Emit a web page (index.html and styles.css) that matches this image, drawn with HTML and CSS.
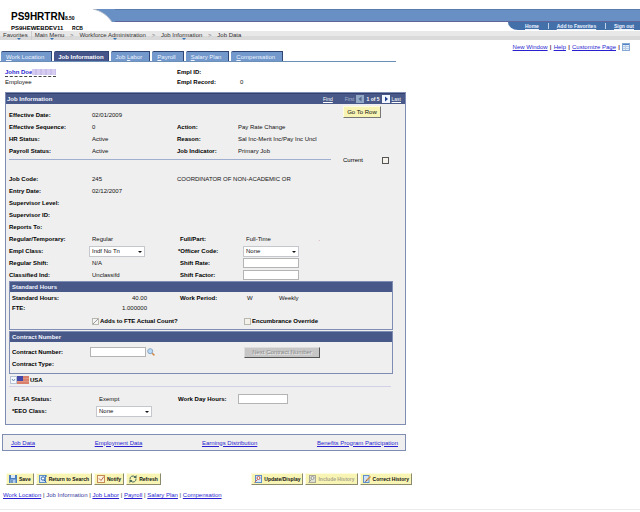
FILE: index.html
```html
<!DOCTYPE html>
<html lang="en">
<head>
  <meta charset="UTF-8">
  <meta name="viewport" content="width=device-width, initial-scale=1.0">
  <title>Job Data</title>
  <link rel="stylesheet" href="styles.css">
</head>
<body>
  <header class="masthead">
    <div class="brand">
      <div class="brand-name">PS9HRTRN<small>8.50</small></div>
      <div class="brand-db">PS9HEWEBDEV11 <span>RCB</span></div>
    </div>
    <div class="banner">
      <div class="banner-bar">
        <svg class="banner-curve" width="22" height="13" viewBox="0 0 22 13"><path d="M0 0H22V13H19C15 7 9 2 0 0Z" fill="#6990c4"/><path d="M0 0C9 2 15 7 19 13" fill="none" stroke="#b4bccb"/></svg>
        <div class="banner-fill"></div>
      </div>
      <nav class="user-nav">
        <a href="#">Home</a>
        <a href="#">Add to Favorites</a>
        <a href="#">Sign out</a>
      </nav>
    </div>
  </header>

  <nav class="crumbs">
    <a class="menu first" href="#">Favorites</a>
    <a class="menu" href="#">Main Menu</a><i>&gt;</i>
    <a class="menu" href="#">Workforce Administration</a><i>&gt;</i>
    <a class="menu" href="#">Job Information</a><i>&gt;</i>
    <a href="#">Job Data</a>
  </nav>

  <div class="page-links">
    <a href="#">New Window</a><b>|</b><a href="#">Help</a><b>|</b><a href="#">Customize Page</a><b>|</b>
    <svg width="8" height="8" viewBox="0 0 8 8"><rect x=".5" y=".5" width="7" height="7" fill="#e4eefa" stroke="#86a8d4"/><path d="M1 1.5H7" stroke="#4f83c4"/><path d="M1 3.5H7M1 5.5H7M3.5 2V7" stroke="#b8cce6"/></svg>
  </div>

  <main class="content">
    <nav class="tabs">
      <a class="tab" href="#"><u>W</u>ork Location</a>
      <a class="tab active" href="#">Job Information</a>
      <a class="tab" href="#">Job <u>L</u>abor</a>
      <a class="tab" href="#"><u>P</u>ayroll</a>
      <a class="tab" href="#"><u>S</u>alary Plan</a>
      <a class="tab" href="#"><u>C</u>ompensation</a>
    </nav>

    <div class="person">
      <div><a class="person-name" href="#">John Doe<span class="masked"></span></a></div><b>Empl ID:</b><span></span>
      <span>Employee</span><b>Empl Record:</b><span>0</span>
    </div>

    <section class="panel">
      <div class="panel-head">
        <h2>Job Information</h2>
        <div class="scroller">
          <a class="find" href="#">Find</a>
          <span class="dim">First</span>
          <svg width="8" height="8" viewBox="0 0 8 8"><rect width="8" height="8" fill="#93a8c4"/><path d="M5.5 1.5V6.5L2.5 4Z" fill="#52678f"/></svg>
          <b>1 of 5</b>
          <svg width="8" height="8" viewBox="0 0 8 8"><rect width="8" height="8" fill="#f2f6ff"/><path d="M3 1.5V6.5L6 4Z" fill="#1f3f8c"/></svg>
          <a href="#">Last</a>
        </div>
      </div>

      <div class="status">
        <div class="status-main">
          <div class="fields cols-a">
            <b>Effective Date:</b><span>02/01/2009</span><b></b><span></span>
            <b>Effective Sequence:</b><span>0</span><b>Action:</b><span>Pay Rate Change</span>
            <b>HR Status:</b><span>Active</span><b>Reason:</b><span>Sal Inc-Merit Inc/Pay Inc Uncl</span>
            <b>Payroll Status:</b><span>Active</span><b>Job Indicator:</b><span>Primary Job</span>
          </div>
          <hr>
        </div>
        <div class="status-side">
          <button class="btn goto">Go To Row</button>
          <label class="current">Current <input type="checkbox"></label>
        </div>
      </div>

      <div class="fields cols-a">
        <b>Job Code:</b><span>245</span><span class="wide">COORDINATOR OF NON-ACADEMIC OR</span>
        <b>Entry Date:</b><span class="rest">02/12/2007</span>
        <b class="row">Supervisor Level:</b>
        <b class="row">Supervisor ID:</b>
        <b class="row">Reports To:</b>
      </div>
      <div class="fields cols-b">
        <b>Regular/Temporary:</b><span>Regular</span><b>Full/Part:</b><span class="mark">Full-Time<i>.</i></span>
        <label for="empl-class">Empl Class:</label><div class="drop"><select id="empl-class"><option>Indf No Tn</option></select></div>
        <label class="req" for="officer">*Officer Code:</label><div class="drop"><select id="officer"><option>None</option></select></div>
        <b>Regular Shift:</b><span>N/A</span><label for="rate">Shift Rate:</label><input class="box" id="rate" type="text">
        <b>Classified Ind:</b><span>Unclassifd</span><label for="factor">Shift Factor:</label><input class="box" id="factor" type="text">
      </div>

      <section class="group">
        <h3>Standard Hours</h3>
        <div class="fields cols-hours">
          <b>Standard Hours:</b><span class="num">40.00</span><b>Work Period:</b><span>W</span><span>Weekly</span>
          <b>FTE:</b><span class="num">1.000000</span>
        </div>
        <div class="checks">
          <label><input type="checkbox" checked disabled>Adds to FTE Actual Count?</label>
          <label><input type="checkbox" disabled>Encumbrance Override</label>
        </div>
      </section>

      <section class="group">
        <h3>Contract Number</h3>
        <div class="fields cols-contract">
          <label for="contract">Contract Number:</label><input class="box" id="contract" type="text">
          <svg width="8" height="8" viewBox="0 0 8 8"><path d="M5 5L7.4 7.4" stroke="#d08a4a" stroke-width="1.5"/><circle cx="3.2" cy="3.2" r="2.5" fill="#b8dcf8" stroke="#8ca4c0"/></svg>
          <button class="btn next" disabled>Next Contract Number</button>
          <b>Contract Type:</b>
        </div>
      </section>

      <div class="country">
        <svg width="19" height="8" viewBox="0 0 19 8"><rect x=".5" y=".5" width="6" height="7" fill="#f4f7fb" stroke="#b8c4d4"/><path d="M2 3L3.5 5L5 3" fill="none" stroke="#7090b8"/><rect x="7" width="12" height="8" fill="#d8806c"/><path d="M7 2.5H19M7 5.5H19" stroke="#e09484"/><rect x="7" width="6" height="5" fill="#4448a8"/></svg>
        <b>USA</b>
      </div>
      <div class="fields cols-usa">
        <b>FLSA Status:</b><span>Exempt</span><label for="hours">Work Day Hours:</label><input class="box" id="hours" type="text">
        <label class="req" for="eeo">*EEO Class:</label><div class="drop"><select id="eeo"><option>None</option></select></div>
      </div>
    </section>

    <nav class="related">
      <a href="#">Job Data</a>
      <a href="#">Employment Data</a>
      <a href="#">Earnings Distribution</a>
      <a href="#">Benefits Program Participation</a>
    </nav>

    <div class="toolbar">
      <button class="btn"><svg width="8" height="8" viewBox="0 0 8 8"><rect width="8" height="8" fill="#4a7cc0"/><rect x="2" width="4" height="3" fill="#dce8f8"/><rect x="1.5" y="4.5" width="5" height="3.5" fill="#b4cdec"/><path d="M3 5V8" stroke="#35629f"/></svg>Save</button>
      <button class="btn"><svg width="8" height="8" viewBox="0 0 8 8"><rect x=".5" y=".5" width="6" height="7" fill="#d4e6fa" stroke="#5f8fc8"/><circle cx="4" cy="3.5" r="1.7" fill="#fff" stroke="#2f62a8"/><path d="M5 5L7.5 7.5" stroke="#2f62a8"/><path d="M6 1H8" stroke="#2f62a8"/></svg>Return to Search</button>
      <button class="btn"><svg width="8" height="8" viewBox="0 0 8 8"><rect x=".5" y=".5" width="7" height="7" fill="#fdf2dc" stroke="#c88a54"/><path d="M2 3.5L4 5.5L7 1.5" fill="none" stroke="#b86c4c"/></svg>Notify</button>
      <button class="btn"><svg width="8" height="8" viewBox="0 0 8 8"><path d="M1 4.5A3 3 0 0 1 6 1.8M7 3.5A3 3 0 0 1 2 6.2" fill="none" stroke="#45665c"/><path d="M7.5 0V3H4.5ZM.5 8V5H3.5Z" fill="#45665c"/></svg>Refresh</button>
      <button class="btn push"><svg width="8" height="8" viewBox="0 0 8 8"><rect x="1.5" y=".5" width="6" height="7" fill="#d8e8fa" stroke="#5f8fc8"/><circle cx="4.5" cy="3" r="1.5" fill="#fff" stroke="#c86050"/><path d="M3.5 4.5L.5 7.5" stroke="#c86050"/></svg>Update/Display</button>
      <button class="btn" disabled><svg width="8" height="8" viewBox="0 0 8 8"><rect x="1.5" y=".5" width="6" height="7" fill="#e0e0d0" stroke="#a8a898"/><circle cx="4.5" cy="3" r="1.5" fill="#eee" stroke="#999"/><path d="M3.5 4.5L.5 7.5" stroke="#999"/></svg>Include History</button>
      <button class="btn"><svg width="8" height="8" viewBox="0 0 8 8"><rect x=".5" y=".5" width="5.5" height="7" fill="#cfe2f8" stroke="#5f8fc8"/><path d="M3 6L7.5 1.5" stroke="#d8924c" stroke-width="1.5"/><path d="M2.5 6.5L3.5 5.5" stroke="#333"/></svg>Correct History</button>
    </div>

    <nav class="foot-links">
      <a href="#">Work Location</a> | <span>Job Information</span> | <a href="#">Job Labor</a> | <a href="#">Payroll</a> | <a href="#">Salary Plan</a> | <a href="#">Compensation</a>
    </nav>
  </main>
  <hr class="page-end">
</body>
</html>
```

FILE: styles.css
```css
* { box-sizing: border-box; }
body { margin: 0; background: #fff; color: #111; font: 6px/12px "Liberation Sans", Arial, sans-serif; }
a { color: #2a1fd0; }
svg { flex: none; display: block; }
h2, h3 { margin: 0; font-size: 6px; }
label { font-weight: bold; }
b, label { color: #000; }

/* masthead */
.masthead { display: flex; padding-top: 9px; height: 31px; }
.brand { width: 93px; padding: 2px 0 0 11px; font-weight: bold; color: #000; white-space: nowrap; }
.brand-name { font-size: 10px; line-height: 11px; }
.brand-name small { font-size: 5px; }
.brand-db { font-size: 6px; line-height: 8px; color: #000; }
.brand-db span { margin-left: 7px; font-size: 5px; }
.banner { flex: 1; display: flex; flex-direction: column; }
.banner-bar { display: flex; height: 13px; }
.banner-fill { flex: 1; background: #6990c4; border-top: 1px solid #587cac; border-bottom: 1px solid #62659a; }
.user-nav { align-self: flex-end; display: flex; width: 132px; height: 8px; background: #4470aa; border-bottom-left-radius: 10px 8px; justify-content: space-between; padding: 0 6px 0 17px; }
.user-nav a { color: #eef4ff; font-size: 5px; font-weight: bold; line-height: 8px; }
.user-nav a + a { position: relative; }
.user-nav a + a::before { content: ""; position: absolute; left: -9px; top: 1px; width: 1px; height: 6px; background: #c0d0e6; }

.crumbs { display: flex; height: 9px; padding-left: 3px; line-height: 8px; background: linear-gradient(#e8e8e8 60%, #dadada 60%); }
.crumbs a { color: #333; text-decoration: none; }
.crumbs .first { margin-right: 3px; padding-right: 3px; border-right: 1px solid #ccc; }
.crumbs i { width: 15px; text-align: center; font-style: normal; color: #777; }
.crumbs .menu { position: relative; }
.crumbs .menu::after { content: ""; position: absolute; top: 7px; left: 50%; border: 2px solid transparent; border-top-color: #3674b8; border-bottom: 0; }

.page-links { display: flex; justify-content: flex-end; align-items: center; height: 11px; padding: 3px 10px 0 0; line-height: 8px; }
.page-links b { width: 6px; text-align: center; color: #5a2a4a; }

.content { max-width: 412px; }
.tabs { display: flex; gap: 2px; margin-right: 16px; padding-left: 1px; border-bottom: 1px solid #6c8fb8; }
.tab { height: 10px; padding: 0 7px 0 5px; line-height: 11px; color: #eef4ff; background: #7398cb; border: solid #2f4674; border-width: 1px 1px 0 0; border-top-left-radius: 2px; text-decoration: none; }
.tab.active { color: #fff; background: #46568a; font-weight: bold; padding: 0 4px; }

.person { display: grid; grid-template-columns: 172px 63px 1fr; padding: 5px 0 5px 5px; line-height: 10px; }
.person-name { display: inline-flex; height: 9px; align-items: center; font-weight: bold; text-decoration: none; border-bottom: 1px dashed #444; }
.masked { width: 24px; height: 6px; background: repeating-linear-gradient(90deg, #d6cdf0 0 3px, #c8bfea 3px 5px); }

/* job information */
.panel { margin: 0 6px 0 5px; padding-bottom: 7px; background: #efefef; border: 1px solid #7f8db4; }
.panel-head { display: flex; justify-content: space-between; height: 11px; padding: 0 4px 0 1px; background: #485888; border-top: 1px solid #33406f; line-height: 11px; }
.panel-head h2 { color: #f4f6ff; }
.scroller { display: flex; align-items: center; gap: 2px; font-size: 5px; }
.scroller a, .scroller b { color: #fff; }
.scroller .find { margin-right: 10px; }
.dim { color: #a8b4d0; }

.status { display: flex; padding-left: 3px; }
.status-main { flex: 1; padding-top: 5px; }
.status-main .fields { padding-left: 0; }
.status-main hr { margin: 2px 0 13px; border: 0; border-top: 1px solid #a0aecf; }
.status-side { width: 74px; padding: 2px 16px 0 12px; }
.goto { width: 38px; }
.current { display: flex; justify-content: space-between; align-items: center; margin-top: 36px; font-weight: normal; }

.fields { display: grid; grid-auto-rows: 12px; align-items: center; padding-left: 3px; white-space: nowrap; }
.cols-a { grid-template-columns: 83px 85px 61px 1fr; }
.cols-b { grid-template-columns: 83px 88px 66px 1fr; }
.cols-a .wide { grid-column: span 2; }
.cols-a .rest { grid-column: span 3; }
.cols-a .row { grid-column: 1 / -1; }
.mark i { margin-left: 48px; color: #a33; }
.req { margin-left: -2px; }
.num { width: 54px; text-align: right; }

.drop { position: relative; width: 56px; margin-left: -3px; }
.drop::after { content: ""; position: absolute; right: 3px; top: 5px; border: 2px solid transparent; border-top-color: #111; border-bottom: 0; }
select { display: block; width: 100%; height: 11px; padding: 0 0 0 2px; appearance: none; background: #fff; border: 1px solid #c4c8cc; border-radius: 0; font: inherit; line-height: 9px; color: #111; }
.box { width: 56px; height: 10px; margin-left: -3px; padding: 0 2px; background: #fff; border: 1px solid #b4b4b4; font: inherit; }
input[type="checkbox"] { width: 7px; height: 7px; margin: 0; appearance: none; background: #f4f1ea; border: 1px solid #555; }
input[type="checkbox"]:disabled { border-color: #b8b8b0; }
input[type="checkbox"]:checked { background: linear-gradient(135deg, transparent 45%, #999 45% 60%, transparent 60%) #f4f4f4; }

.group { margin: 0 12px 1px 3px; border: 1px solid #7f8db4; }
.group h3 { height: 10px; padding-left: 2px; background: #485888; color: #f4f6ff; line-height: 10px; }
.cols-hours { grid-template-columns: 81px 87px 67px 32px 1fr; grid-auto-rows: 10px; padding: 1px 0 0 2px; }
.checks { display: grid; grid-template-columns: 152px 1fr; padding: 2px 0 2px 82px; }
.checks label { display: flex; align-items: center; gap: 1px; }
.cols-contract { grid-template-columns: 81px 54px 97px 1fr; padding: 4px 0 3px 2px; }

.btn { display: flex; align-items: center; justify-content: center; gap: 2px; height: 12px; padding: 0 2px; background: #f8f4b4; border: 1px solid; border-color: #fffce0 #8c8a6c #8c8a6c #fffce0; font: bold 5px/10px "Liberation Sans", Arial, sans-serif; color: #111; white-space: nowrap; }
.btn:disabled { color: #a9a68c; }
.btn.goto { padding: 0; font-size: 6px; font-weight: normal; border-color: #fffce0 #777 #777 #fffce0; }
.btn.next { width: 76px; height: 11px; font-size: 6px; font-weight: normal; color: #8a8a8a; background: #c6c6c6; border-color: #ddd #555 #555 #ddd; text-shadow: 1px 1px 0 #eee; }

.country { display: flex; align-items: flex-end; gap: 1px; height: 12px; margin: 0 14px 6px 3px; padding: 0 0 2px 1px; border-bottom: 1px solid #d0d0e8; line-height: 7px; }
.cols-usa { grid-template-columns: 85px 79px 63px 1fr; padding-left: 8px; }
.cols-usa .box { width: 50px; }

/* below the panel */
.related { display: flex; justify-content: space-between; align-items: center; height: 17px; margin: 9px 6px 0 2px; padding: 0 7px 0 8px; background: #efefef; border: 1px solid #7f8db4; }
.toolbar { display: flex; gap: 2px; margin: 22px 0 4px 6px; }
.push { margin-left: auto; }
.foot-links { padding-left: 3px; color: #333; }
.foot-links span { color: #3a3a9c; }
.page-end { margin: 8px 0 0; border: 0; border-top: 1px solid #ebebeb; }
```
